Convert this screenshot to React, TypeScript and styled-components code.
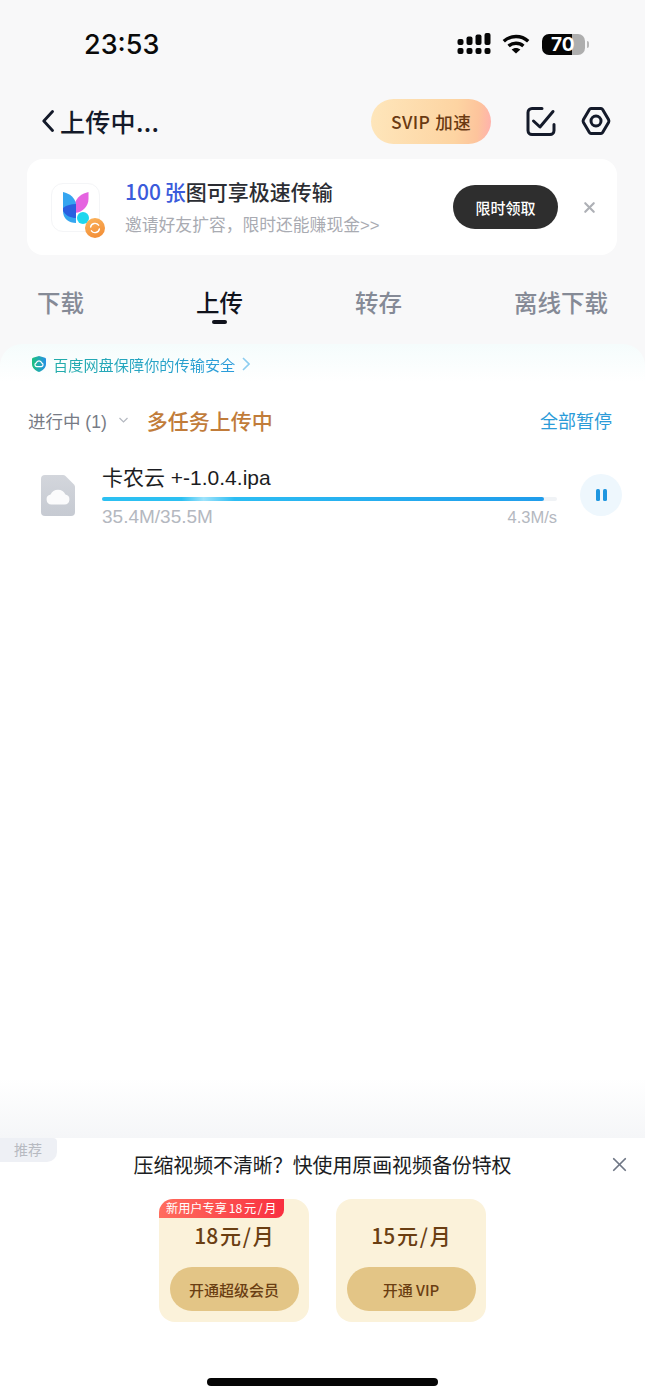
import React from "react";
import styled, { createGlobalStyle } from "styled-components";
import { X } from "lucide-react";

const GlobalStyle = createGlobalStyle`
  html, body {
    margin: 0;
    padding: 0;
    background: #f8f8f9;
  }
  * {
    box-sizing: border-box;
  }
`;

const sans = `"Liberation Sans", "Noto Sans CJK SC", sans-serif`;
const cjk = `"Noto Sans CJK SC", sans-serif`;

const Page = styled.div`
  width: 645px;
  height: 1398px;
  display: flex;
  flex-direction: column;
  background: #f8f8f9;
  font-family: ${sans};
  overflow: hidden;
`;

const StatusBar = styled.div`
  height: 88px;
  flex: none;
  display: flex;
  align-items: center;
  justify-content: space-between;
  padding: 0 60px 0 84px;
`;

const Clock = styled.span`
  font-family: "Inter", sans-serif;
  font-size: 27px;
  font-weight: 500;
  color: #0a0a0a;
`;

const StatusIcons = styled.div`
  display: flex;
  align-items: center;
  gap: 11px;
`;

const Battery = styled.div`
  position: relative;
  width: 43px;
  height: 21px;
  margin-left: 1px;
  border-radius: 7px;
  background: linear-gradient(90deg, #060606 0 69%, #aeaeae 69% 100%);
  color: #fff;
  font-family: "Inter", sans-serif;
  font-size: 19px;
  font-weight: 700;
  line-height: 21px;
  padding-left: 9px;
  &::after {
    content: "";
    position: absolute;
    right: -4px;
    top: 7px;
    width: 2px;
    height: 7px;
    border-radius: 0 2px 2px 0;
    background: #b8b8b8;
  }
`;

const NavBar = styled.div`
  height: 66px;
  flex: none;
  display: flex;
  align-items: center;
  padding: 0 34px 0 42px;
`;

const NavTitle = styled.span`
  margin-left: 6px;
  font-family: ${cjk};
  font-size: 25px;
  line-height: 30px;
  font-weight: 500;
  letter-spacing: 0.3px;
  color: #141a2a;
  flex: 1;
`;

const SpeedPill = styled.div`
  width: 120px;
  height: 45px;
  border-radius: 23px;
  display: flex;
  align-items: center;
  justify-content: center;
  gap: 5px;
  background: linear-gradient(95deg, #fee6bb 0%, #fdd4a2 70%, #fdc49c 88%, #ffb0ae 100%);
  color: #6a3a12;
  font-family: ${cjk};
  font-size: 17.5px;
  font-weight: 500;
  letter-spacing: 0.4px;
`;

const NavActions = styled.div`
  display: flex;
  align-items: center;
  gap: 25px;
  margin-left: 35px;
`;

const Banner = styled.div`
  flex: none;
  margin: 5px 28px 0 27px;
  height: 96px;
  border-radius: 16px;
  background: #fff;
  display: flex;
  align-items: center;
  padding: 0 19px 0 24px;
`;

const LogoTile = styled.div`
  position: relative;
  width: 49px;
  height: 49px;
  flex: none;
  border-radius: 12px;
  border: 1px solid #f4f5f7;
  background: #fff;
`;

const LogoBadge = styled.div`
  position: absolute;
  right: -6px;
  bottom: -7px;
  width: 20px;
  height: 20px;
  border-radius: 50%;
  background: linear-gradient(160deg, #fbb45c, #f28a33);
  display: flex;
  align-items: center;
  justify-content: center;
`;

const BannerText = styled.div`
  margin-left: 25px;
  flex: 1;
  display: flex;
  flex-direction: column;
  gap: 11px;
`;

const BannerTitle = styled.div`
  font-family: ${cjk};
  font-size: 21px;
  line-height: 26px;
  font-weight: 500;
  color: #2b2d33;
  white-space: nowrap;
`;

const BannerAccent = styled.span`
  color: #3b5bdb;
  word-spacing: -1px;
`;

const BannerSub = styled.div`
  font-size: 16.8px;
  line-height: 22px;
  color: #a9abb2;
  white-space: nowrap;
`;

const ClaimButton = styled.div`
  width: 105px;
  height: 44px;
  flex: none;
  border-radius: 22px;
  background: #2e2e2e;
  color: #fff;
  font-family: ${cjk};
  font-size: 15px;
  font-weight: 500;
  display: flex;
  align-items: center;
  justify-content: center;
`;

const BannerClose = styled.div`
  margin-left: 23px;
  display: flex;
  color: #aeb0b6;
`;

const Tabs = styled.div`
  flex: none;
  height: 89px;
  display: flex;
  align-items: flex-start;
  justify-content: space-between;
  padding: 32px 37px 0;
`;

const Tab = styled.div<{ $active?: boolean }>`
  position: relative;
  font-size: 23.5px;
  line-height: 34px;
  font-weight: 500;
  color: ${(p) => (p.$active ? "#10131c" : "#858a96")};
  ${(p) =>
    p.$active &&
    `&::after {
      content: "";
      position: absolute;
      left: 16px;
      top: 33px;
      width: 15px;
      height: 4px;
      border-radius: 2px;
      background: #10131c;
    }`}
`;

const Sheet = styled.div`
  flex: 1;
  display: flex;
  flex-direction: column;
  background: linear-gradient(180deg, #f5fcfc 0, #ffffff 38px);
  border-radius: 22px 22px 0 0;
`;

const SafetyRow = styled.div`
  height: 40px;
  flex: none;
  display: flex;
  align-items: center;
  padding-left: 32px;
  font-size: 15.2px;
`;

const SafetyText = styled.span`
  margin-left: 7px;
  background: linear-gradient(90deg, #22acaa, #2a9bdc);
  -webkit-background-clip: text;
  background-clip: text;
  color: transparent;
`;

const SectionRow = styled.div`
  height: 72px;
  flex: none;
  display: flex;
  align-items: center;
  padding: 0 33px 0 28px;
`;

const SectionLabel = styled.span`
  font-size: 17.5px;
  color: #777b85;
`;

const SectionHint = styled.span`
  margin-left: 19px;
  font-size: 21px;
  font-weight: 500;
  color: #c17c3a;
  flex: 1;
`;

const PauseAll = styled.span`
  font-size: 18px;
  color: #2b9bd8;
`;

const TaskRow = styled.div`
  flex: none;
  display: flex;
  align-items: center;
  padding: 0 23px 0 41px;
  margin-top: 1px;
  height: 76px;
`;

const TaskBody = styled.div`
  margin-left: 27px;
  width: 455px;
  padding-top: 3px;
  display: flex;
  flex-direction: column;
`;

const TaskName = styled.div`
  font-size: 21px;
  line-height: 26px;
  color: #1b1d22;
`;

const Track = styled.div`
  margin-top: 6px;
  height: 4px;
  border-radius: 2px;
  background: #f0f3f6;
`;

const TrackFill = styled.div`
  height: 100%;
  border-radius: 2px;
  background: linear-gradient(90deg, #2cc0f2 0, #2cc0f2 18%, #9fe3fb 23%, #2cbdf3 30%, #1f9ceb 100%);
`;

const TaskMeta = styled.div`
  margin-top: 5px;
  display: flex;
  align-items: baseline;
  justify-content: space-between;
  color: #b4b8c0;
  font-size: 19px;
  line-height: 22px;
`;

const TaskSpeed = styled.span`
  font-size: 16.5px;
`;

const PauseButton = styled.div`
  margin-left: 23px;
  width: 42px;
  height: 42px;
  flex: none;
  border-radius: 50%;
  background: #eef7fd;
  display: flex;
  align-items: center;
  justify-content: center;
  gap: 3px;
`;

const PauseBar = styled.i`
  width: 4px;
  height: 12px;
  border-radius: 1.5px;
  background: #1f96e0;
`;

const Spacer = styled.div`
  flex: 1;
  background: linear-gradient(180deg, #ffffff calc(100% - 60px), #f5f6f8 100%);
`;

const Promo = styled.div`
  position: relative;
  flex: none;
  height: 260px;
  background: #fff;
  display: flex;
  flex-direction: column;
  align-items: center;
`;

const PromoTag = styled.div`
  position: absolute;
  left: 0;
  top: 0;
  width: 57px;
  height: 24px;
  border-radius: 0 4px 10px 0;
  background: #eef0f5;
  color: #b7bac1;
  font-size: 14px;
  line-height: 24px;
  padding-left: 14px;
`;

const PromoTitle = styled.div`
  margin-top: 14px;
  font-size: 19.9px;
  line-height: 28px;
  color: #1b1d22;
  white-space: nowrap;
`;

const PromoClose = styled.div`
  position: absolute;
  right: 14px;
  top: 15px;
  display: flex;
  color: #6f7785;
`;

const Plans = styled.div`
  margin-top: 19px;
  display: flex;
  gap: 27px;
`;

const PlanCard = styled.div`
  position: relative;
  width: 150px;
  height: 123px;
  border-radius: 16px;
  background: #fbf2da;
  display: flex;
  flex-direction: column;
  align-items: center;
`;

const PlanRibbon = styled.div`
  position: absolute;
  left: 0;
  top: 0;
  width: 125px;
  height: 19px;
  border-radius: 14px 0 8px 0;
  background: linear-gradient(90deg, #ff6d5e, #f92f40);
  color: #fff;
  font-family: ${cjk};
  font-size: 12.2px;
  line-height: 19px;
  padding-left: 7px;
  white-space: nowrap;
  word-spacing: -1px;
`;

const PlanPrice = styled.div`
  margin-top: 22px;
  font-family: ${cjk};
  font-size: 21px;
  line-height: 28px;
  font-weight: 500;
  color: #6a3e12;
  word-spacing: -3px;
`;

const PlanButton = styled.div`
  margin-top: 18px;
  width: 129px;
  height: 44px;
  border-radius: 22px;
  background: #e3c586;
  color: #6a3e12;
  font-family: ${cjk};
  font-size: 15px;
  font-weight: 500;
  display: flex;
  align-items: center;
  justify-content: center;
`;

const HomeIndicator = styled.div`
  position: absolute;
  left: 207px;
  bottom: 12px;
  width: 231px;
  height: 8px;
  border-radius: 4px;
  background: #050505;
`;

function SignalIcon() {
  const cols = [3.5, 12.5, 21.5, 30.5];
  return (
    <svg width="34" height="22" viewBox="0 0 34 22" fill="#060606">
      {cols.map((x) => (
        <rect key={x} x={x - 3} y="15" width="6" height="6" rx="2" />
      ))}
      <rect x="0.5" y="6" width="6" height="6" rx="2" />
      <rect x="9.5" y="3.5" width="6" height="8.5" rx="2" />
      <rect x="18.5" y="1.5" width="6" height="10.5" rx="2" />
      <rect x="27.5" y="0" width="6" height="12" rx="2" />
    </svg>
  );
}

function WifiIcon() {
  return (
    <svg width="28" height="20" viewBox="0 0 28 20" fill="none" stroke="#060606" strokeWidth="3.4">
      <path d="M1.8 7.2C8.6 .9 19.4 .9 26.2 7.2" />
      <path d="M6.6 12C10.8 8.3 17.2 8.3 21.4 12" />
      <path d="M14 19.6 9.6 15.6C12 13.4 16 13.4 18.4 15.6Z" fill="#060606" stroke="none" />
    </svg>
  );
}

function CheckSquareIcon() {
  return (
    <svg width="30" height="30" viewBox="0 0 30 30" fill="none" stroke="#141a2a" strokeWidth="3" strokeLinecap="round" strokeLinejoin="round">
      <path d="M16 2.5H6A4 4 0 0 0 2 6.5V24.5A4 4 0 0 0 6 28.5H24A4 4 0 0 0 28 24.5V18.5" />
      <path d="M7.5 15 14 21 27 5.5" />
    </svg>
  );
}

function HexSettingsIcon() {
  return (
    <svg width="30" height="30" viewBox="0 0 30 30" fill="none" stroke="#141a2a" strokeWidth="3" strokeLinejoin="round">
      <path d="M10 2.5H20Q21 2.5 21.6 3.5L27.5 13.5Q28.3 15 27.5 16.5L21.6 26.5Q21 27.5 20 27.5H10Q9 27.5 8.4 26.5L2.5 16.5Q1.7 15 2.5 13.5L8.4 3.5Q9 2.5 10 2.5Z" />
      <circle cx="15" cy="15" r="5" />
    </svg>
  );
}

function BrandLogo() {
  return (
    <svg width="47" height="47" viewBox="0 0 47 47">
      <path d="M36.5 8V15C36.5 22 31 28 23 29V19C25 13 30 9.5 36.5 8Z" fill="#e563e0" />
      <path d="M11 8C18 9.5 23 14 24 20V39C17 39 11 35 11 27Z" fill="#35a5f0" />
      <path d="M24 20V34C19 34 14 32 11 27V24C15 21 19 20 24 20Z" fill="#2a5fe0" />
      <circle cx="31" cy="34" r="6" fill="#1fd6ee" />
    </svg>
  );
}

function ShieldIcon() {
  return (
    <svg width="14" height="16" viewBox="0 0 14 16">
      <defs>
        <linearGradient id="shieldFill" x1="0" y1="0" x2="1" y2="0">
          <stop offset="0" stopColor="#1cc27e" />
          <stop offset="1" stopColor="#2790e6" />
        </linearGradient>
      </defs>
      <path d="M7 0 13 1.8Q14 2.1 14 3.2V8C14 12 10.5 14.8 7 16 3.5 14.8 0 12 0 8V3.2Q0 2.1 1 1.8Z" fill="url(#shieldFill)" />
      <path d="M4.6 10.6A1.9 1.9 0 0 1 4.3 6.9 2.8 2.8 0 0 1 9.7 6.9 1.9 1.9 0 0 1 9.4 10.6Z" fill="none" stroke="#fff" strokeWidth="1.2" />
    </svg>
  );
}

function FileCloudIcon() {
  return (
    <svg width="34" height="41" viewBox="0 0 34 41">
      <defs>
        <linearGradient id="fileFill" x1="0" y1="0" x2="0" y2="1">
          <stop offset="0" stopColor="#d3d6dc" />
          <stop offset="1" stopColor="#c6cad2" />
        </linearGradient>
      </defs>
      <path d="M4 0H22Q23.5 0 24.5 1L33 9.5Q34 10.5 34 12V37A4 4 0 0 1 30 41H4A4 4 0 0 1 0 37V4A4 4 0 0 1 4 0Z" fill="url(#fileFill)" />
      <path d="M10.5 29.5A5 5 0 0 1 9.6 19.6 8 8 0 0 1 24.4 19.6 5 5 0 0 1 23.5 29.5Z" fill="#fbfbfc" />
    </svg>
  );
}

export default function App() {
  return (
    <Page>
      <GlobalStyle />
      <StatusBar>
        <Clock>23:53</Clock>
        <StatusIcons>
          <SignalIcon />
          <WifiIcon />
          <Battery>70</Battery>
        </StatusIcons>
      </StatusBar>

      <NavBar>
        <svg width="12" height="22" viewBox="0 0 12 22" fill="none" stroke="#141a2a" strokeWidth="2.8" strokeLinecap="round" strokeLinejoin="round">
          <path d="M10.5 1.5 1.8 11 10.5 20.5" />
        </svg>
        <NavTitle>上传中...</NavTitle>
        <SpeedPill>
          <span>SVIP</span>
          <span>加速</span>
        </SpeedPill>
        <NavActions>
          <CheckSquareIcon />
          <HexSettingsIcon />
        </NavActions>
      </NavBar>

      <Banner>
        <LogoTile>
          <BrandLogo />
          <LogoBadge>
            <svg width="12" height="12" viewBox="0 0 12 12" fill="none" stroke="#fff" strokeWidth="1.4" strokeLinecap="round">
              <path d="M1.6 5A4.5 4.5 0 0 1 9.6 3.2" />
              <path d="M10.4 7A4.5 4.5 0 0 1 2.4 8.8" />
            </svg>
          </LogoBadge>
        </LogoTile>
        <BannerText>
          <BannerTitle>
            <BannerAccent>100 张</BannerAccent>图可享极速传输
          </BannerTitle>
          <BannerSub>邀请好友扩容，限时还能赚现金&gt;&gt;</BannerSub>
        </BannerText>
        <ClaimButton>限时领取</ClaimButton>
        <BannerClose>
          <X size={17} strokeWidth={3} />
        </BannerClose>
      </Banner>

      <Tabs>
        <Tab>下载</Tab>
        <Tab $active>上传</Tab>
        <Tab>转存</Tab>
        <Tab>离线下载</Tab>
      </Tabs>

      <Sheet>
        <SafetyRow>
          <ShieldIcon />
          <SafetyText>百度网盘保障你的传输安全</SafetyText>
          <svg width="8" height="14" viewBox="0 0 8 14" fill="none" stroke="#8ccdf0" strokeWidth="1.6" style={{ marginLeft: 7 }}>
            <path d="M1 1 7 7 1 13" />
          </svg>
        </SafetyRow>

        <SectionRow>
          <SectionLabel>进行中 (1)</SectionLabel>
          <svg width="9" height="6" viewBox="0 0 9 6" fill="none" stroke="#b4b8c0" strokeWidth="1.2" style={{ marginLeft: 12 }}>
            <path d="M.5 1 4.5 5 8.5 1" />
          </svg>
          <SectionHint>多任务上传中</SectionHint>
          <PauseAll>全部暂停</PauseAll>
        </SectionRow>

        <TaskRow>
          <FileCloudIcon />
          <TaskBody>
            <TaskName>卡农云 +-1.0.4.ipa</TaskName>
            <Track>
              <TrackFill style={{ width: `${(442 / 455) * 100}%` }} />
            </Track>
            <TaskMeta>
              <span>35.4M/35.5M</span>
              <TaskSpeed>4.3M/s</TaskSpeed>
            </TaskMeta>
          </TaskBody>
          <PauseButton>
            <PauseBar />
            <PauseBar />
          </PauseButton>
        </TaskRow>

        <Spacer />

        <Promo>
          <PromoTag>推荐</PromoTag>
          <PromoTitle>压缩视频不清晰？快使用原画视频备份特权</PromoTitle>
          <PromoClose>
            <X size={23} strokeWidth={1.8} />
          </PromoClose>
          <Plans>
            <PlanCard>
              <PlanRibbon>新用户专享 18 元 / 月</PlanRibbon>
              <PlanPrice>18 元 / 月</PlanPrice>
              <PlanButton>开通超级会员</PlanButton>
            </PlanCard>
            <PlanCard>
              <PlanPrice>15 元 / 月</PlanPrice>
              <PlanButton>开通 VIP</PlanButton>
            </PlanCard>
          </Plans>
          <HomeIndicator />
        </Promo>
      </Sheet>
    </Page>
  );
}
